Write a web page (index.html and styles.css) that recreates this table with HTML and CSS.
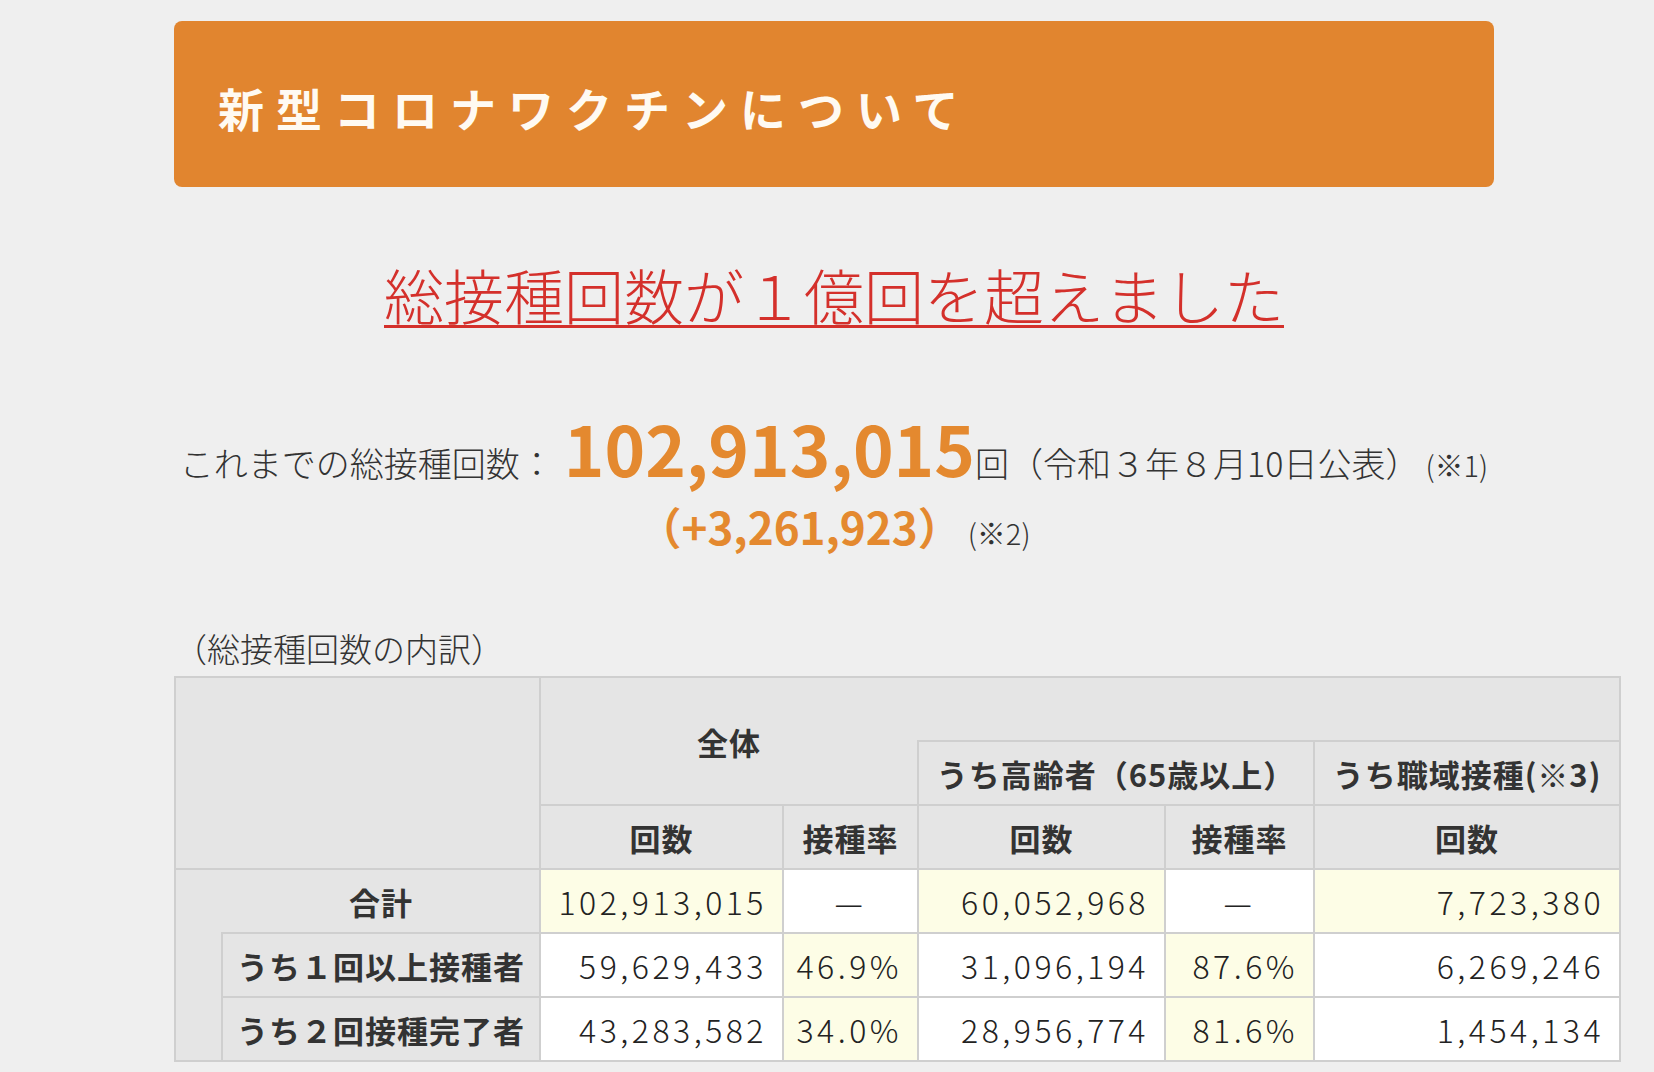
FILE: index.html
```html
<!DOCTYPE html>
<html lang="ja">
<head>
<meta charset="utf-8">
<title>新型コロナワクチンについて</title>
<link rel="stylesheet" href="styles.css">
</head>
<body>
<main class="page">
  <header class="hero">
    <h1 class="hero-title">新型コロナワクチンについて</h1>
  </header>

  <h2 class="headline"><span class="headline-text">総接種回数が１億回を超えました</span></h2>

  <p class="total-line">
    <span class="total-label">これまでの総接種回数：</span><span class="total-num">102,913,015</span><span class="total-unit">回（令和３年８月10日公表）</span><span class="note">(※1)</span>
  </p>
  <p class="diff-line">
    <span class="diff-num">（+3,261,923）</span><span class="note">(※2)</span>
  </p>

  <p class="caption">（総接種回数の内訳）</p>

  <table class="stats">
    <colgroup>
      <col class="c-indent">
      <col class="c-label">
      <col class="c-all-n">
      <col class="c-all-r">
      <col class="c-old-n">
      <col class="c-old-r">
      <col class="c-work">
    </colgroup>
    <tr>
      <th class="blank" colspan="2" rowspan="3"></th>
      <th colspan="2" rowspan="2">全体</th>
      <th class="blank top-right" colspan="3"></th>
    </tr>
    <tr>
      <th colspan="2">うち高齢者（65歳以上）</th>
      <th>うち職域接種(※3)</th>
    </tr>
    <tr>
      <th>回数</th>
      <th>接種率</th>
      <th>回数</th>
      <th>接種率</th>
      <th>回数</th>
    </tr>
    <tr>
      <th class="total" colspan="2">合計</th>
      <td class="num hl">102,913,015</td>
      <td class="dash">—</td>
      <td class="num hl">60,052,968</td>
      <td class="dash">—</td>
      <td class="num hl">7,723,380</td>
    </tr>
    <tr>
      <th class="indent" rowspan="2"></th>
      <th class="label">うち１回以上接種者</th>
      <td class="num">59,629,433</td>
      <td class="num hl">46.9%</td>
      <td class="num">31,096,194</td>
      <td class="num hl">87.6%</td>
      <td class="num">6,269,246</td>
    </tr>
    <tr>
      <th class="label">うち２回接種完了者</th>
      <td class="num">43,283,582</td>
      <td class="num hl">34.0%</td>
      <td class="num">28,956,774</td>
      <td class="num hl">81.6%</td>
      <td class="num">1,454,134</td>
    </tr>
  </table>
</main>
</body>
</html>
```

FILE: styles.css
```css
html, body {
  margin: 0;
  padding: 0;
}

body {
  background: #efefef;
  font-family: "Noto Sans CJK JP", "Noto Sans", sans-serif;
  color: #333;
}

.page {
  width: 1320px;
  margin-left: 174px;
  padding-top: 21px;
}

.hero {
  height: 166px;
  background: #e1852f;
  border-radius: 8px;
  display: flex;
  align-items: center;
  padding-left: 44px;
  box-sizing: border-box;
}

.hero-title {
  margin: 0;
  padding-top: 6px;
  color: #fffaf2;
  font-size: 46px;
  font-weight: 700;
  letter-spacing: 12px;
  line-height: 1;
}

.headline {
  margin: 67px 0 0;
  height: 80px;
  line-height: 80px;
  text-align: center;
  font-size: 60px;
  font-weight: 300;
  color: #d4302b;
}

.headline-text {
  text-decoration: underline;
  text-decoration-thickness: 3px;
  text-underline-offset: 5px;
}

.total-line {
  margin: 73px 0 0;
  height: 80px;
  line-height: 80px;
  text-align: center;
  white-space: nowrap;
  font-size: 34px;
  font-weight: 300;
  color: #333;
}

.total-label {
  margin-right: 10px;
}

.total-num {
  font-size: 69px;
  font-weight: 700;
  color: #e4892f;
}

.note {
  font-size: 29px;
  margin-left: 6px;
}

.diff-line {
  margin: 14px 0 0;
  height: 50px;
  line-height: 50px;
  text-align: center;
  white-space: nowrap;
  font-size: 34px;
  font-weight: 300;
  color: #333;
}

.diff-num {
  font-size: 44px;
  font-weight: 700;
  color: #e4892f;
}

.caption {
  margin: 75px 0 0;
  height: 44px;
  line-height: 44px;
  font-size: 33px;
  font-weight: 300;
  color: #333;
}

.stats {
  margin-top: 6px;
  width: 1445px;
  border-collapse: collapse;
  table-layout: fixed;
  border: 2px solid #cfcfcf;
}

.c-indent { width: 47px; }
.c-label { width: 318px; }
.c-all-n { width: 243px; }
.c-all-r { width: 135px; }
.c-old-n { width: 247px; }
.c-old-r { width: 149px; }
.c-work { width: 306px; }

.stats tr {
  height: 64px;
}

.stats th,
.stats td {
  border: 2px solid #cfcfcf;
  padding: 0;
  white-space: nowrap;
}

.stats th {
  background: #e5e5e5;
  font-size: 31px;
  font-weight: 700;
  letter-spacing: 1px;
  color: #333;
  text-align: center;
}

.stats th.top-right {
  border-left-style: hidden;
}

.stats th.total {
  padding-left: 47px;
}

.stats th.indent {
  border-top-style: hidden;
}

.stats td {
  background: #ffffff;
  font-size: 32px;
  font-weight: 300;
  color: #222;
  letter-spacing: 3.5px;
}

.stats td.hl {
  background: #fdfde6;
}

.stats td.num {
  text-align: right;
  padding-right: 15px;
}

.stats td.dash {
  text-align: center;
}
```
